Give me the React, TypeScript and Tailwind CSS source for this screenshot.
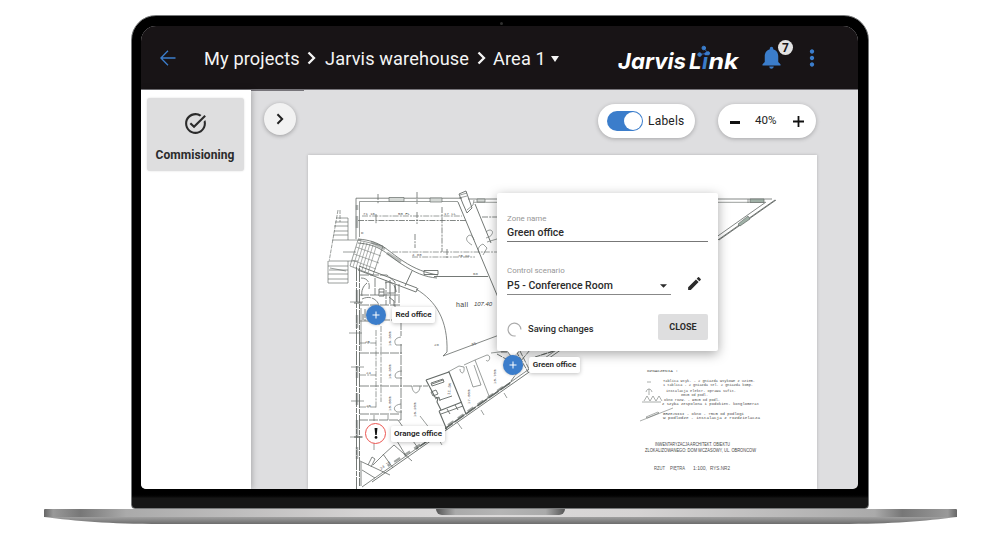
import type { ReactNode } from "react";
import { MdAdd, MdEdit, MdMoreVert, MdNotifications, MdTaskAlt } from "react-icons/md";

function Chevron({ className }: { className: string }) {
  return (
    <svg viewBox="0 0 9 14" className={className} fill="none" stroke="currentColor" strokeWidth="2.3">
      <path d="M1.5 1.5 7 7l-5.5 5.5" />
    </svg>
  );
}

function Logo() {
  return (
    <svg viewBox="616 40 126 34" className="h-[34px] w-[126px] shrink-0" fontFamily="Inter, sans-serif" fontSize="22" fontWeight="700" fontStyle="italic" fill="#fff">
      <text x="618" y="69.3" textLength="68" lengthAdjust="spacingAndGlyphs">Jarvis</text>
      <text x="689" y="69.3">L</text>
      <text x="702" y="69.3" fill="#3b7dcb">i</text>
      <text x="708.5" y="69.3" textLength="30" lengthAdjust="spacingAndGlyphs">nk</text>
      <g fill="#3b7dcb" stroke="#3b7dcb">
        <path d="M699.5 54.5 708 53.2 703.8 48" fill="none" strokeWidth="0.7" />
        <circle cx="703.8" cy="48" r="1.8" />
        <circle cx="699.6" cy="54.6" r="1.8" />
        <circle cx="708" cy="53.3" r="1.6" />
      </g>
    </svg>
  );
}

function Header() {
  return (
    <header className="flex h-[64px] shrink-0 items-center border-b border-[#77757a] bg-[#181416] text-[18.2px] text-[#f4f4f4]">
      <svg viewBox="0 0 16 16" className="ml-[19px] h-4 w-4 shrink-0" fill="none" stroke="#3b7dcb" strokeWidth="1.3">
        <path d="M15.5 8H1.2M8 .8.9 8 8 15.2" />
      </svg>
      <nav className="ml-[28px] flex w-[357px] shrink-0 items-center pt-[2px] tracking-[0.13px] whitespace-nowrap">
        <span className="w-[103px]">My projects</span>
        <Chevron className="h-[14px] w-[9px]" />
        <span className="ml-[9px] w-[152px]">Jarvis warehouse</span>
        <Chevron className="h-[14px] w-[9px]" />
        <span className="ml-[7px] w-[58px]">Area 1</span>
        <svg viewBox="0 0 8 6" className="mt-[2px] h-[6px] w-[8px]" fill="currentColor"><path d="M0 0h8L4 6z" /></svg>
      </nav>
      <div className="-mt-[2px] ml-[55px]"><Logo /></div>
      <div className="relative ml-[16px] h-[27px] w-[27px] shrink-0">
        <MdNotifications className="h-[27px] w-[27px] text-[#3b7dcb]" />
        <span className="absolute -top-[4px] left-[20px] flex h-[15px] w-[15px] items-center justify-center rounded-full bg-[#e2e2e2] text-[12px] font-bold text-[#181416]">7</span>
      </div>
      <MdMoreVert className="ml-[14px] h-[26px] w-[26px] shrink-0 text-[#3b7dcb]" />
    </header>
  );
}

const dash = "6 1.2 2 1";

function Ticks({ x, y, text, rotate = 0 }: { x: number; y: number; text: string; rotate?: number }) {
  return (
    <text x={x} y={y} fontSize="4" fill="#555" transform={`rotate(${rotate} ${x} ${y})`}>{text}</text>
  );
}

function FloorPlan() {
  return (
    <svg viewBox="308 155 509 334" className="h-[334px] w-[509px]" fill="none" stroke="#646a67" strokeWidth="0.65" fontFamily="Liberation Mono, monospace">
      {/* outer walls */}
      <path d="M356 239V198.2H462M468 199H772" strokeWidth="0.8" />
      <path d="M359.5 237V201.5H458M474 202.3H765" />
      <path d="M356.5 267V489M359.5 268V486" strokeWidth="0.9" strokeDasharray="14 1 5 1" />
      <path d="M776 200 719 240M775 200 372 482" strokeWidth="0.9" />
      <path d="M766 202 362 487" strokeWidth="0.8" />
      <path d="M510 383 416 449" strokeWidth="1.6" strokeDasharray="12 2" />
      <path d="M503 387 438 432M430 438 388 466" strokeWidth="2.2" strokeOpacity="0.6" strokeDasharray="7 5" />
      <path d="M750 199h14v3.5h-14zM738 224l10-8 2 3-10 7zM748 199v4" fill="#9fb0a6" />
      <path d="M389 197.5h15v4h-15zM430 198h12v4h-12zM477 199h8v3h-8z" fill="#d5d9d6" />
      <path d="M357 205v5M357 216v12M357 290v12M357 315v13M357 366v12M357 393v12M357 420v18M357 447v12" strokeWidth="2.5" strokeOpacity="0.5" />

      {/* building grid */}
      <g>
        <path d="M358 220.5H466M482 217H530" strokeDasharray={dash} strokeWidth="0.8" />
        <path d="M362 216H462M392 252H500M412 257H475" strokeDasharray={dash} />
        <path d="M376 214v10M378 194v10M415 234v14M417 192v12M417 212v12M442 207v45M447 249v9" strokeDasharray={dash} strokeWidth="0.8" />
        <path d="M343 252h13M350 302h13M349 333h13M351 367h13M351 401h13M350 437h13" />
        <path d="M354 303h8M354 437h8" strokeWidth="1" />
      </g>

      {/* stairs and service block */}
      <path d="M338 210 329 262M340 210v12" strokeDasharray="4 1" />
      <path d="M336 218h12M335 222h13M334 226h14M334 231h14M333 235h15M332 240h29M348 218v22M348 261v22" />
      <path d="M330 261h28M328 266h20M329 270h19M328 274h20M328 279h20M328 283h20M330 268l16 3M328 261v22" />
      <path d="m358 240-8 26 23 9 10-29z" />
      <path d="m361 241-8 26m11-25-8 26m11-25-8 26m11-25-8 26m11-25-8 27m11-25-8 26M356 247l25 9M354 254l25 9M352 260l24 9" strokeOpacity="0.8" />
      <path d="M358 239c24 2 28 11 45 22 12 8 23 12 35 14M358 243c22 2 26 9 42 20 15 10 25 14 37 15" strokeWidth="0.85" />
      <path d="m371 242 14 7M387 253l14 9" strokeWidth="3" strokeOpacity="0.45" />
      <path d="M424 270.5h14v4h-14zM434 276.5H488" strokeWidth="0.9" />
      <path d="M359 266 417 288M358 270 416 292 418 288M412 271 405 286" strokeWidth="0.9" />
      <path d="M416 289c20 12 32 31 31 63l-4 4M443 356 510 331" strokeWidth="0.8" />

      {/* entrance corridor */}
      <path d="m459 194 7-3 6 17-5 5-4-9zM458 202 497 295 520 350M475 204 491 243" strokeWidth="0.9" />
      <path d="m460 195 7-2M459 198l8-2M467 210l6-5 1-5M472 245c-5-3-7-6-4-9 2-2 5 0 6 4M486 232c4-4 8-1 6 2-1 3-4 3-6 4M480 254c-3-4-2-8 3-10l4 4-4 7M487 242l23-7" />

      {/* west wing offices */}
      <path d="M360 275h27l8 7v25M375 278v17M386 280v25M360 295h38M385 283c7-3 11 4 11 9M360 305h38M361 278c7 0 9 5 8 11M362 299c10-5 18 3 17 9M387 293h9l-1-8M365 309v12M379 307v18M360 321h22M381 320h18M399 284v22" strokeDasharray="9 1" strokeWidth="0.8" />
      <path d="M379 289h5v7h-5zM379 292h5M363 314v6M390 280v24M367 283c-4 3-6 8-5 13M389 297l5 4v5" strokeWidth="0.9" />
      <path d="M401 320v16M401 344v76" strokeWidth="0.8" strokeDasharray="10 1" />
      <path d="M360 353h42M360 386h42M359 420h42M360 414h40M403 386h25" strokeWidth="0.8" strokeDasharray="9 1" />
      <path d="M376 330v78M381 326v76M360 343h16M360 375h16M360 407h16M374 415v6M388 415v5" strokeDasharray={dash} />
      <path d="M401 337c-7 1-7 5-5 8h6M402 371c-7 0-8 5-6 7h6M401 404c-8 1-8 6-4 8h5M412 386c0 5 3 7 4 7 3-1 4-4 4-7M374 443v7M361 308v43" />

      {/* diagonal rooms */}
      <path d="m426 380 23-8 17 42M426 380l9 17 3 1-1 4 4 8M439 411l23-9M439 411l8 19" strokeWidth="1.1" />
      <path d="m431 383 12-4 1 3-12 4zM431 392l5-2 2 4-5 2zM435 399l4-2 1 4M440 400l12-4M441 414l22-8M447 409l3 5M455 405l3 5M432 384l11-4" strokeWidth="0.9" />
      <path d="m448 372 11-6 5 1c1 8-4 7-4 2M464 365l11-5 14 36M475 360l12-5c5 0 2 9-1 5M466 366l7 21 8-2-7-20M491 353l16-2 6 8M420 416l17 22" />
      <path d="m398 420 20 28M360 461l30 14M373 465l10-10 11-10 18 16M362 470l13 8M361 462v24M383 454l10 14M397 441l9 15M368 465l4-8 3 2-4 8" strokeWidth="0.8" />
      <path d="m457 422 5 7M481 410l3 5M439 440l3 5M504 393l3 5" />
      <path d="M501 352h18M516 351l12 21M520 351l10 20M530 350l-10 12M535 357l22-7M541 355l20-6M497 354l9 5M523 365l-15 20" strokeDasharray="6 1" strokeWidth="0.9" />

      <g stroke="none">
        <Ticks x={363} y={215} text="71  16" />
        <Ticks x={398} y={215} text="50   FL" />
        <Ticks x={444} y={215} text="17   LL" />
        <Ticks x={361} y={234} text="D" />
        <Ticks x={412} y={256} text="4   80" />
        <Ticks x={458} y={257} text="75  CC" />
        <Ticks x={473} y={275} text="68" />
        <Ticks x={365} y={343} text="25" />
        <Ticks x={366} y={374} text="24" />
        <Ticks x={366} y={407} text="26" />
        <Ticks x={434} y={346} text="28" />
        <Ticks x={472} y={346} text="95" rotate={-18} />
        <Ticks x={391} y={346} text="16.30m" rotate={-90} />
        <Ticks x={391} y={379} text="16.30m" rotate={-90} />
        <Ticks x={391} y={411} text="15.50m" rotate={-90} />
        <Ticks x={416} y={417} text="16.20m" rotate={-90} />
        <Ticks x={470} y={404} text="17.50m" rotate={-90} />
        <Ticks x={496} y={384} text="15.70m" rotate={-90} />
        <Ticks x={450} y={395} text="11.5m" rotate={-85} />
        <Ticks x={381} y={470} text="24 18" rotate={-35} />
        <text x="456" y="307" fontSize="7" fill="#444" fontFamily="Liberation Sans, sans-serif" textLength="12">hall</text>
        <text x="474" y="306" fontSize="6" fill="#444" fontFamily="Liberation Sans, sans-serif" fontStyle="italic" textLength="18">107.40</text>
      </g>

      {/* legend */}
      <g stroke="none" fill="#4a4a4a" fontSize="4">
        <text x="647" y="372" textLength="31" lengthAdjust="spacingAndGlyphs">OZNACZENIA :</text>
        <text x="663" y="382" textLength="92" lengthAdjust="spacingAndGlyphs">Tablica wtyk. - 2 gniazda wtykowe z uziem.</text>
        <text x="663" y="386" textLength="90" lengthAdjust="spacingAndGlyphs">1 tablica - 2 gniazda tel. 2 gniazda komp.</text>
        <text x="666" y="392" textLength="70" lengthAdjust="spacingAndGlyphs">instalacja elektr. oprawa sufit.</text>
        <text x="681" y="395.5" textLength="27" lengthAdjust="spacingAndGlyphs">80cm od podl.</text>
        <text x="664" y="401" textLength="56" lengthAdjust="spacingAndGlyphs">okno rozw. - 90cm od podl.</text>
        <text x="662" y="405" textLength="97" lengthAdjust="spacingAndGlyphs">z szyba zespolona i podokien. konglomerat</text>
        <text x="663" y="415" textLength="81" lengthAdjust="spacingAndGlyphs">GRZEJNIKI - okno - 75cm od podlogi</text>
        <text x="663" y="419" textLength="97" lengthAdjust="spacingAndGlyphs">w podlodze - instalacja z rozdzielacza</text>
      </g>
      <g stroke="none" fill="#444" fontFamily="Liberation Sans, sans-serif">
        <text x="655" y="446" fontSize="4.8" textLength="75" lengthAdjust="spacingAndGlyphs">INWENTARYZACJA ARCHITEKT. OBIEKTU</text>
        <text x="645" y="452" fontSize="4.8" textLength="111" lengthAdjust="spacingAndGlyphs">ZLOKALIZOWANEGO: DOM WCZASOWY, UL. OBRONCOW</text>
        <g fontSize="5.6" fill="#555">
          <text x="654" y="470" textLength="11" lengthAdjust="spacingAndGlyphs">RZUT</text>
          <text x="670" y="470" textLength="15" lengthAdjust="spacingAndGlyphs">PIĘTRA</text>
          <text x="693" y="470" textLength="14" lengthAdjust="spacingAndGlyphs">1:100,</text>
          <text x="710" y="470" textLength="20" lengthAdjust="spacingAndGlyphs">RYS.NR2</text>
        </g>
      </g>
      <path d="M647 382h4M646 392c1-4 5-4 6 0M649 389v6M642 402h19M644 401l3-5 3 5 3-5 3 5 3-5 3 5M640 421l33-13M646 417l12-5 1 1-12 5z" strokeWidth="0.55" />
    </svg>
  );
}

function PinLabel({ children, className }: { children: ReactNode; className: string }) {
  return (
    <span className={`flex items-center justify-center rounded-[2px] bg-white text-[8px] font-semibold whitespace-nowrap text-[#222] shadow-[0_1px_4px_rgba(0,0,0,0.25)] ${className}`}>
      {children}
    </span>
  );
}

function PlusPin() {
  return (
    <span className="flex h-[20px] w-[20px] shrink-0 items-center justify-center rounded-full bg-[#3b7dcb] text-white shadow-[0_0_3px_rgba(0,0,0,0.3)]">
      <MdAdd className="h-[12px] w-[12px]" />
    </span>
  );
}

function ZonePopup() {
  return (
    <section className="absolute top-[38px] left-[189px] flex h-[158px] w-[221px] flex-col rounded-[2px] bg-white px-[10px] text-[#2b2b2b] shadow-[0_3px_12px_rgba(0,0,0,0.35)]">
      <div className="mt-[20px] flex h-[29px] flex-col border-b border-[#777]">
        <span className="text-[7.9px] leading-[11px] text-[#969696]">Zone name</span>
        <span className="text-[10.5px] leading-[17px] font-medium">Green office</span>
      </div>
      <div className="mt-[23px] flex h-[30px] items-start">
        <div className="flex h-[30px] w-[164px] flex-col border-b border-[#888]">
          <span className="text-[7.9px] leading-[11px] text-[#969696]">Control scenario</span>
          <span className="flex items-center justify-between pr-[4px] text-[10.5px] leading-[19px] font-medium">
            P5 - Conference Room
            <svg viewBox="0 0 8 4" className="h-[4px] w-[7px]" fill="currentColor"><path d="M0 0h8L4 4z" /></svg>
          </span>
        </div>
        <MdEdit className="mt-[10px] ml-[15px] h-[17px] w-[17px]" />
      </div>
      <div className="mt-[19px] flex items-center">
        <svg viewBox="0 0 14 14" className="mt-[4px] h-[15px] w-[15px]" fill="none" stroke="#aaa" strokeWidth="1.1">
          <path d="M8 13A6 6 0 1 1 13 7" />
        </svg>
        <span className="mt-[4px] ml-[6px] w-[130px] text-[9.3px] font-medium">Saving changes</span>
        <button className="h-[26px] w-[50px] rounded-[2px] bg-[#dededf] pt-[2px] text-[9px] font-bold">CLOSE</button>
      </div>
      <span className="absolute top-[154px] left-[12px] h-[8px] w-[8px] rotate-45 bg-white" />
    </section>
  );
}

function Sheet() {
  return (
    <div className="relative ml-[57px] h-[334px] w-[509px] shrink-0 overflow-hidden bg-white shadow-[0_0_3px_rgba(0,0,0,0.2)]">
      <FloorPlan />
      <div className="absolute top-[150px] left-[58px] flex items-center gap-[6px]">
        <PlusPin />
        <PinLabel className="h-[16px] w-[43px]">Red office</PinLabel>
      </div>
      <ZonePopup />
      <div className="absolute top-[200px] left-[195px] flex items-center gap-[6px]">
        <PlusPin />
        <PinLabel className="h-[16px] w-[51px]">Green office</PinLabel>
      </div>
      <div className="absolute top-[268px] left-[57px] flex items-center gap-[5px]">
        <span className="flex h-[21px] w-[21px] items-center justify-center rounded-full border-[1.5px] border-[#ec5550] bg-white">
          <svg viewBox="0 0 4 12" className="h-[11px] w-[4px]" fill="#111"><path d="M.4 0h3.2L2.8 7.5H1.2z" /><circle cx="2" cy="10.3" r="1.5" /></svg>
        </span>
        <PinLabel className="h-[16px] w-[54px]">Orange office</PinLabel>
      </div>
    </div>
  );
}

function Toolbar() {
  const pill = "flex h-[34px] items-center rounded-full bg-white shadow-[0_1px_4px_rgba(0,0,0,0.25)]";
  return (
    <div className="flex h-[65px] shrink-0 items-center pr-[42px] pb-[3px] pl-[13px] text-[12px] text-[#222]">
      <button className="mb-[4px] flex h-[32px] w-[32px] items-center justify-center rounded-full bg-[#f2f2f2] shadow-[0_1px_4px_rgba(0,0,0,0.3)]">
        <Chevron className="h-[12px] w-[8px]" />
      </button>
      <div className={`${pill} ml-auto w-[97px] pl-[9px]`}>
        <span className="flex h-[20px] w-[36px] items-center justify-end rounded-full bg-[#3b7dcb] p-px">
          <span className="h-[18px] w-[18px] rounded-full bg-white" />
        </span>
        <span className="ml-[5px] tracking-[0.2px]">Labels</span>
      </div>
      <div className={`${pill} ml-[23px] w-[98px] pl-[12px]`}>
        <span className="mt-[2px] h-[3px] w-[10px] bg-[#111]" />
        <span className="ml-[15px] w-[34px] text-[11.6px]">40%</span>
        <svg viewBox="0 0 11 11" className="ml-[4px] h-[11px] w-[11px]" stroke="#111" strokeWidth="1.8"><path d="M5.5 0v11M0 5.5h11" /></svg>
      </div>
    </div>
  );
}

export default function App() {
  return (
    <main className="flex h-[539px] w-[1000px] flex-col items-center overflow-hidden bg-white pt-[15px] font-[Roboto,sans-serif]">
      <div className="relative flex h-[494px] w-[738px] shrink-0 flex-col rounded-t-[25px] rounded-b-[4px] border border-[#77797a] bg-linear-to-b from-black from-97% to-[#161616] to-98% px-[9px] pt-[10px]">
        <span className="absolute top-[6px] left-[368px] h-[3px] w-[3px] rounded-full bg-[#30302f]" />
        <div className="flex h-[463px] w-[717px] shrink-0 flex-col overflow-hidden rounded-t-[15px] rounded-b-[5px] bg-[#dedee0]">
          <Header />
          <div className="flex h-[399px]">
            <aside className="z-10 w-[110px] shrink-0 bg-white px-[6px] pt-[8px] shadow-[1px_0_6px_rgba(0,0,0,0.25)]">
              <button className="flex h-[73px] w-[97px] flex-col items-center rounded-[3px] bg-[#dededf] pt-[13px] pr-[1px] text-[#2b2b2b] shadow-[0_0_2px_rgba(0,0,0,0.15)]">
                <MdTaskAlt className="h-[25px] w-[25px]" />
                <span className="mt-[10px] text-[12px] leading-[19px] font-bold tracking-[0.05px]">Commisioning</span>
              </button>
            </aside>
            <div className="flex flex-1 flex-col">
              <div className="-mb-px h-px w-[53px] shrink-0 bg-[#77757a]" />
              <Toolbar />
              <Sheet />
            </div>
          </div>
        </div>
      </div>
      <div className="flex w-[913px] shrink-0 flex-col items-center">
        <div className="flex h-[8px] w-full justify-center rounded-t-[1px] bg-[linear-gradient(90deg,#666_0%,#999_1%,#777_4%,#aaa_9%,#d5d3d3_35%,#dcdada_50%,#d5d3d3_65%,#aaa_91%,#777_94%,#999_99%,#666_100%)]">
          <div className="h-[6px] w-[129px] rounded-b-[6px] bg-[linear-gradient(90deg,#555,#aaa_15%,#b5b5b5_50%,#aaa_85%,#555)]" />
        </div>
        <svg viewBox="0 0 913 7" className="h-[7px] w-[913px]">
          <defs>
            <linearGradient id="under" x2="0" y2="1">
              <stop offset="0" stopColor="#a0a0a0" />
              <stop offset="1" stopColor="#6c6c6c" />
            </linearGradient>
          </defs>
          <path d="M0 0h913C880 4 850 7 795 7H118C63 7 33 4 0 0z" fill="url(#under)" />
        </svg>
      </div>
    </main>
  );
}
